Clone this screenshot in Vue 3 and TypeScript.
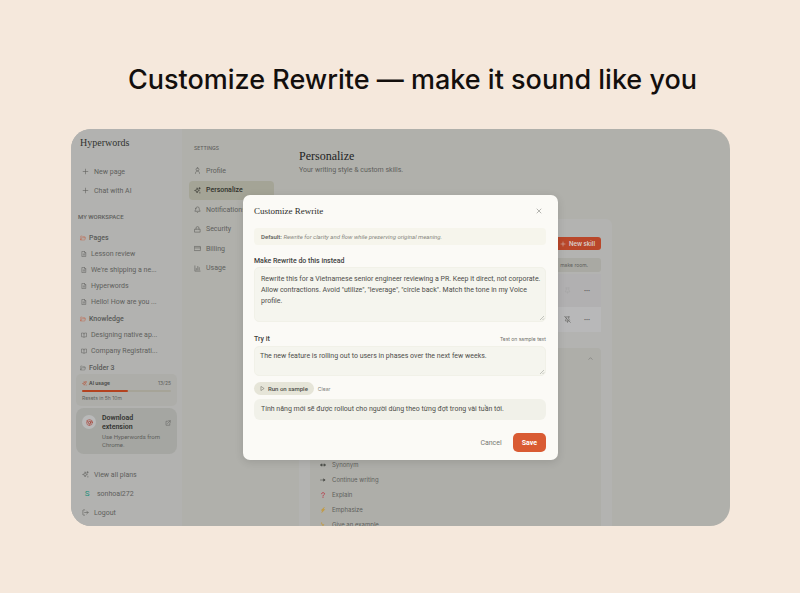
<script setup lang="ts">
import { ref } from 'vue'

interface TreeItem {
  label: string
}
interface TreeGroup {
  label: string
  icon: 'file' | 'book'
  accent: boolean
  items: TreeItem[]
}

const groups: TreeGroup[] = [
  {
    label: 'Pages',
    icon: 'file',
    accent: true,
    items: [
      { label: 'Lesson review' },
      { label: "We're shipping a ne..." },
      { label: 'Hyperwords' },
      { label: 'Hello! How are you ...' },
    ],
  },
  {
    label: 'Knowledge',
    icon: 'book',
    accent: true,
    items: [{ label: 'Designing native ap...' }, { label: 'Company Registrati...' }],
  },
  { label: 'Folder 3', icon: 'file', accent: false, items: [] },
]

const iconPaths: Record<string, string> = {
  plus: 'M12 4v16M4 12h16',
  folder: 'M3 19V4h6l3 3h8v4M3 19l3-8h16l-3 9H4a1 1 0 0 1-1-1z',
  file: 'M5 2h9l5 5v15H5zM14 2v5h5M9 12h6M9 16h6',
  book: 'M12 6v15M12 6C10 4 7 4 2 4v15c5 0 8 0 10 2 2-2 5-2 10-2V4c-5 0-8 0-10 2z',
  sparkles:
    'M11 4l2 5.500 5.500 2.500-5.500 2-2.500 6.500-2-6.500L2 12l6.500-2.500zM19 2v5M16.500 4.500h5M20 18v3',
  user: 'M12 3a5 5 0 1 0 0 10 5 5 0 0 0 0-10zM5 22c0-5 2.500-8 7-8s7 3 7 8',
  bell: 'M6 9a6 6 0 0 1 12 0c0 6 3 7 3 9H3c0-2 3-3 3-9zM10 21c1 1.500 3 1.500 4 0',
  lock: 'M3 11h18v10H3zM7 11V7a5 5 0 0 1 10 0v4',
  card: 'M2 5h20v14H2zM2 10h20',
  chart: 'M3 3v18h18M8 17v-5M13 17V5M18 17V9',
  logout: 'M9 3H5a2 2 0 0 0-2 2v14a2 2 0 0 0 2 2h4M9 12h12M16 7l5 5-5 5',
  external: 'M14 3h7v7M21 3L10 14M10 5H4v16h15v-7',
  close: 'M4 4l16 16M20 4L4 20',
  play: 'M6 3l14 9-14 9z',
  chevron: 'M4 16l8-8 8 8',
  pin: 'M12 17v5M7 3h10M8 3v7l-3 4v3h14v-3l-3-4V3',
  pinOff: 'M12 17v5M5 3h14M8 7v3l-3 4v3h12M16 3v7l3 4M2 2l20 20',
  swap: 'M2 12h20M7 8l-5 4 5 4zM17 8l5 4-5 4z',
  arrow: 'M2 12h18M15 8l5 4-5 4z',
  question: 'M6 7c0-6 12-6 12 0 0 5-6 4-6 9M12 21v1',
  bolt: 'M17 2L5 13h6l-4 9 12-12h-6z',
  bulb: 'M6 3c-2 7 3 9 8 9l-3-4M14 12l-4 4M7 20h10',
}

const settings = [
  { label: 'Profile', icon: 'user' },
  { label: 'Personalize', icon: 'sparkles' },
  { label: 'Notifications', icon: 'bell' },
  { label: 'Security', icon: 'lock' },
  { label: 'Billing', icon: 'card' },
  { label: 'Usage', icon: 'chart' },
]

const skills = [
  { label: 'Synonym', icon: 'swap', tone: 'dark' },
  { label: 'Continue writing', icon: 'arrow', tone: 'dark' },
  { label: 'Explain', icon: 'question', tone: 'red' },
  { label: 'Emphasize', icon: 'bolt', tone: 'gold' },
  { label: 'Give an example', icon: 'bulb', tone: 'gold' },
]

const used = 13
const quota = 25
const instruction = ref(
  'Rewrite this for a Vietnamese senior engineer reviewing a PR. Keep it direct, not corporate. Allow contractions. Avoid "utilize", "leverage", "circle back". Match the tone in my Voice profile.',
)
const sample = ref('The new feature is rolling out to users in phases over the next few weeks.')
</script>

<template>
  <main class="stage">
    <h1 class="headline">Customize Rewrite — make it sound like you</h1>

    <div class="window">
      <aside class="sidebar">
        <div class="brand">Hyperwords</div>
        <div class="actions">
          <button type="button" class="side-row">
            <svg class="ico" viewBox="0 0 24 24"><path :d="iconPaths.plus" /></svg>New page
          </button>
          <button type="button" class="side-row">
            <svg class="ico" viewBox="0 0 24 24"><path :d="iconPaths.plus" /></svg>Chat with AI
          </button>
        </div>
        <div class="caption">MY WORKSPACE</div>
        <div class="tree">
          <div v-for="g in groups" :key="g.label" class="group">
            <a href="#" class="folder" :class="{ accent: g.accent }">
              <svg class="ico" viewBox="0 0 24 24"><path :d="iconPaths.folder" /></svg>{{ g.label }}
            </a>
            <a v-for="i in g.items" :key="i.label" href="#" class="leaf">
              <svg class="ico" viewBox="0 0 24 24"><path :d="iconPaths[g.icon]" /></svg>{{ i.label }}
            </a>
          </div>
        </div>

        <section class="usage">
          <div class="usage-head">
            <svg class="ico" viewBox="0 0 24 24"><path :d="iconPaths.sparkles" /></svg>
            <b>AI usage</b>
            <span class="count">{{ used }}/{{ quota }}</span>
          </div>
          <div class="track"><div class="fill" :style="{ width: (used / quota) * 100 + '%' }"></div></div>
          <div class="resets">Resets in 5h 10m</div>
        </section>

        <a href="#" class="download">
          <span class="chrome">
            <svg class="ico" viewBox="0 0 24 24">
              <circle cx="12" cy="12" r="10" />
              <circle cx="12" cy="12" r="4" />
              <path d="M12 8h9M8.500 14L4 6M15.500 14L11 22" />
            </svg>
          </span>
          <span class="download-text">
            <b>Download extension</b>
            <span>Use Hyperwords from Chrome.</span>
          </span>
          <svg class="ico ext" viewBox="0 0 24 24"><path :d="iconPaths.external" /></svg>
        </a>

        <div class="account">
          <a href="#" class="side-row">
            <svg class="ico" viewBox="0 0 24 24"><path :d="iconPaths.sparkles" /></svg>View all plans
          </a>
          <a href="#" class="side-row user"><span class="avatar">S</span>sonhoai272</a>
          <button type="button" class="side-row">
            <svg class="ico" viewBox="0 0 24 24"><path :d="iconPaths.logout" /></svg>Logout
          </button>
        </div>
      </aside>

      <nav class="settings" aria-label="Settings">
        <div class="settings-caption">SETTINGS</div>
        <div class="settings-list">
          <a v-for="s in settings" :key="s.label" href="#" :class="{ active: s.label === 'Personalize' }">
            <svg class="ico" viewBox="0 0 24 24"><path :d="iconPaths[s.icon]" /></svg>{{ s.label }}
          </a>
        </div>
      </nav>

      <section class="content">
        <h2>Personalize</h2>
        <p class="sub">Your writing style &amp; custom skills.</p>
        <div class="panel">
          <button type="button" class="new-skill">
            <svg class="ico" viewBox="0 0 24 24"><path :d="iconPaths.plus" /></svg>New skill
          </button>
          <div class="notice">make room.</div>
          <div class="skill-row faint">
            <svg class="ico" viewBox="0 0 24 24"><path :d="iconPaths.pin" /></svg><span>•••</span>
          </div>
          <div class="skill-row">
            <svg class="ico" viewBox="0 0 24 24"><path :d="iconPaths.pinOff" /></svg><span>•••</span>
          </div>
          <div class="builtins">
            <svg class="ico fold" viewBox="0 0 24 24"><path :d="iconPaths.chevron" /></svg>
            <ul>
              <li v-for="s in skills" :key="s.label">
                <svg class="ico glyph" :class="[s.tone, s.icon]" viewBox="0 0 24 24">
                  <path :d="iconPaths[s.icon]" />
                </svg>
                {{ s.label }}
              </li>
            </ul>
          </div>
        </div>
      </section>

      <div class="scrim">
        <form class="modal" role="dialog" aria-labelledby="dlg-title" @submit.prevent>
          <header>
            <h3 id="dlg-title">Customize Rewrite</h3>
            <button type="button" class="close" aria-label="Close">
              <svg class="ico" viewBox="0 0 24 24"><path :d="iconPaths.close" /></svg>
            </button>
          </header>
          <p class="default"><b>Default:</b> <i>Rewrite for clarity and flow while preserving original meaning.</i></p>
          <label for="instruction">Make Rewrite do this instead</label>
          <div class="field">
            <textarea id="instruction" v-model="instruction" class="tall" spellcheck="false"></textarea>
            <svg class="grip" viewBox="0 0 6 6"><path d="M1 5L5 1M3.500 5L5 3.500" /></svg>
          </div>
          <div class="try">
            <label for="sample">Try it</label>
            <span>Test on sample text</span>
          </div>
          <div class="field">
            <textarea id="sample" v-model="sample" class="short" spellcheck="false"></textarea>
            <svg class="grip" viewBox="0 0 6 6"><path d="M1 5L5 1M3.500 5L5 3.500" /></svg>
          </div>
          <div class="run-row">
            <button type="button" class="run">
              <svg class="ico" viewBox="0 0 24 24"><path :d="iconPaths.play" /></svg>Run on sample
            </button>
            <button type="button" class="clear">Clear</button>
          </div>
          <output class="result">Tính năng mới sẽ được rollout cho người dùng theo từng đợt trong vài tuần tới.</output>
          <footer>
            <button type="button" class="cancel">Cancel</button>
            <button type="submit" class="save">Save</button>
          </footer>
        </form>
      </div>
    </div>
  </main>
</template>

<style>
body {
  background: #f5e8dc;
}
</style>

<style scoped>
* {
  box-sizing: border-box;
}
.stage {
  display: flex;
  flex-direction: column;
  height: 100vh;
  padding: 60px 70px 67px 71px;
  background: #f5e8dc;
  font-family: Roboto, Inter, sans-serif;
  font-size: 7px;
  color: #5e5f5c;
}
h1,
h2,
h3,
p,
ul {
  margin: 0;
  padding: 0;
}
a {
  color: inherit;
  text-decoration: none;
}
button {
  padding: 0;
  border: 0;
  background: none;
  color: inherit;
  font: inherit;
  text-align: left;
}
.ico {
  flex: none;
  width: 7px;
  height: 7px;
  fill: none;
  stroke: currentColor;
  stroke-width: 2;
  stroke-linecap: round;
  stroke-linejoin: round;
}
.headline {
  height: 69px;
  padding-left: 24px;
  font-family: Inter, sans-serif;
  font-size: 27px;
  font-weight: 500;
  line-height: 40px;
  text-align: center;
  white-space: nowrap;
  color: #130f0d;
}
.window {
  position: relative;
  flex: 1;
  min-height: 0;
  display: flex;
  overflow: hidden;
  border-radius: 20px;
  background: #b0b0ab;
}
.sidebar {
  flex: none;
  display: flex;
  flex-direction: column;
  width: 111px;
  padding: 0 5px 4px;
  background: #b2b2b0;
}
.brand {
  padding-left: 4px;
  font-family: 'Liberation Serif', serif;
  font-size: 10px;
  line-height: 28px;
  color: #31322f;
}
.actions {
  margin: 5px 0 12px;
}
.side-row {
  display: flex;
  align-items: center;
  gap: 5px;
  width: 100%;
  height: 19px;
  padding-left: 6px;
}
.caption {
  padding-left: 2px;
  font-size: 6px;
  font-weight: 500;
  line-height: 10px;
}
.tree {
  flex: 1;
  min-height: 0;
  overflow: hidden;
  margin-top: 8px;
}
.group {
  margin-bottom: 1px;
}
.folder,
.leaf {
  display: flex;
  align-items: center;
  height: 16px;
  white-space: nowrap;
}
.folder {
  gap: 3px;
  padding-left: 4px;
  font-weight: 500;
  color: #585956;
}
.folder .ico {
  width: 6px;
  height: 6px;
  color: #6d6e6b;
}
.accent .ico {
  color: #c0694f;
}
.leaf {
  gap: 4px;
  padding-left: 5px;
}
.leaf .ico {
  width: 6px;
  height: 6px;
}
.usage {
  height: 32px;
  padding: 5px 6px 0;
  border-radius: 5px;
  background: #adada9;
  font-family: Inter, sans-serif;
  font-size: 5px;
}
.usage-head {
  display: flex;
  align-items: center;
  gap: 2px;
  line-height: 8px;
}
.usage-head .ico {
  width: 5px;
  height: 5px;
  color: #b9482a;
}
.usage-head b {
  font-weight: 600;
  color: #464744;
}
.count {
  margin-left: auto;
}
.track {
  height: 2px;
  margin: 3px 0;
  border-radius: 1px;
  background: #a6a498;
}
.fill {
  height: 100%;
  border-radius: 1px;
  background: #b34320;
}
.resets {
  line-height: 7px;
}
.download {
  display: flex;
  align-items: flex-start;
  height: 46px;
  margin: 2px 0 11px;
  padding: 6px;
  border-radius: 8px;
  background: #a5a6a2;
}
.chrome {
  flex: none;
  display: grid;
  place-items: center;
  width: 14px;
  height: 14px;
  margin: 1px 6px 0 0;
  border-radius: 50%;
  background: #b9b9b9;
  color: #a84236;
}
.download-text {
  flex: 1;
  font-size: 6px;
  line-height: 8px;
}
.download-text b {
  display: block;
  width: 40px;
  margin-bottom: 1px;
  font-size: 7px;
  line-height: 9px;
  color: #333431;
  font-weight: 600;
}
.ext {
  width: 6px;
  height: 6px;
  margin-top: 6px;
}
.avatar {
  width: 10px;
  font-size: 8px;
  text-align: center;
  color: #22907c;
}
.settings {
  flex: none;
  width: 92px;
  padding: 14px 0 0 7px;
}
.settings-caption {
  padding-left: 5px;
  font-family: Inter, sans-serif;
  font-size: 5px;
  font-weight: 500;
  line-height: 10px;
}
.settings-list {
  display: flex;
  flex-direction: column;
  justify-content: space-between;
  height: 117px;
  margin-top: 8px;
}
.settings-list a {
  display: flex;
  align-items: center;
  gap: 5px;
  height: 19px;
  padding-left: 5px;
  border-radius: 4px;
}
.settings-list .active {
  background: #a4a496;
  color: #30312b;
  font-weight: 500;
}
.content {
  width: 338px;
  padding: 18px 0 0 25px;
}
h2 {
  font-family: 'Liberation Serif', serif;
  font-size: 12px;
  font-weight: 400;
  line-height: 18px;
  color: #22231f;
}
.sub {
  line-height: 10px;
}
.panel {
  display: flex;
  flex-direction: column;
  height: 100%;
  margin-top: 44px;
  padding: 18px 11px 0;
  border-radius: 6px;
  background: #b3b3b1;
}
.new-skill {
  flex: none;
  align-self: flex-end;
  display: flex;
  align-items: center;
  gap: 3px;
  height: 13px;
  padding: 0 6px;
  border-radius: 3px;
  background: #b9472a;
  color: #d8cfca;
  font-family: Inter, sans-serif;
  font-size: 6px;
  font-weight: 600;
}
.new-skill .ico {
  width: 6px;
  height: 6px;
}
.notice {
  flex: none;
  margin: 8px 0 2px;
  padding-right: 13px;
  border-radius: 3px;
  background: #a9a9a3;
  font-family: Inter, sans-serif;
  font-size: 5px;
  line-height: 14px;
  text-align: right;
}
.skill-row {
  flex: none;
  display: flex;
  justify-content: flex-end;
  align-items: center;
  gap: 13px;
  height: 25px;
  padding-right: 11px;
  background: #b8b8b9;
  font-size: 6px;
}
.faint {
  height: 33px;
  background: #b1b0b1;
}
.faint .ico {
  color: #a5a5a5;
}
.builtins {
  flex: 1;
  margin-top: 16px;
  padding: 8px 8px 0;
  border-radius: 4px;
  background: #aeaea9;
}
.fold {
  display: block;
  width: 5px;
  height: 5px;
  margin-left: auto;
}
.builtins ul {
  margin-top: 96px;
  list-style: none;
  font-family: Inter, sans-serif;
  font-size: 6px;
}
.builtins li {
  display: flex;
  align-items: center;
  gap: 6px;
  height: 15px;
}
.glyph {
  width: 6px;
  height: 6px;
  margin-left: 2px;
  stroke-width: 3;
}
.swap,
.arrow,
.bolt {
  fill: currentColor;
  stroke-width: 2;
}
.dark {
  color: #3f403d;
}
.red {
  color: #b9283a;
}
.gold {
  color: #c49a3c;
}
.scrim {
  position: absolute;
  inset: 0;
  display: grid;
  place-items: center;
}
.modal {
  width: 315px;
  padding: 7px 12px 8px 11px;
  border-radius: 7px;
  background: #fbfaf6;
  box-shadow: 0 2px 8px rgba(0, 0, 0, 0.12);
  color: #4d4e4a;
}
.modal header {
  display: flex;
  align-items: center;
  justify-content: space-between;
  height: 18px;
  padding-right: 4px;
}
h3 {
  font-family: 'Liberation Serif', serif;
  font-size: 9px;
  font-weight: 400;
  color: #2b2c29;
}
.close {
  display: flex;
  color: #6f706b;
}
.close .ico {
  width: 6px;
  height: 6px;
}
.default {
  margin: 8px 0 10px;
  padding: 0 7px;
  border-radius: 4px;
  background: #f6f5ec;
  line-height: 17px;
  font-size: 6px;
  color: #868780;
}
.default b {
  font-weight: 500;
  color: #5c5d58;
}
label {
  display: block;
  font-weight: 500;
  line-height: 12px;
  color: #40413d;
}
.field {
  position: relative;
}
textarea {
  display: block;
  width: 100%;
  padding: 6px 2px 6px 6px;
  border: 1px solid #f1f1e8;
  border-radius: 5px;
  background: #f5f5ee;
  color: inherit;
  font: inherit;
  line-height: 11px;
  outline: none;
  overflow: hidden;
  resize: none;
}
.grip {
  position: absolute;
  right: 1px;
  bottom: 1px;
  width: 6px;
  height: 6px;
  fill: none;
  stroke: #8f908a;
  stroke-width: 0.5;
}
.tall {
  height: 55px;
}
.short {
  height: 30px;
  padding: 4px 5px;
}
.try {
  display: flex;
  align-items: center;
  justify-content: space-between;
  margin: 11px 0 1px;
  font-family: Inter, sans-serif;
  font-size: 5px;
  color: #70716b;
}
.try label {
  font-family: Roboto, Inter, sans-serif;
  font-size: 7px;
}
.run-row {
  display: flex;
  align-items: center;
  gap: 4px;
  margin: 6px 0 4px;
}
.run {
  display: flex;
  align-items: center;
  gap: 3px;
  height: 13px;
  padding: 0 6px;
  border-radius: 7px;
  background: #e6e5d8;
  font-size: 6px;
  font-weight: 500;
}
.run .ico {
  width: 5px;
  height: 5px;
}
.clear {
  font-family: Inter, sans-serif;
  font-size: 5px;
  color: #7d7e78;
}
.result {
  display: block;
  padding: 0 7px;
  border-radius: 6px;
  background: #f1f1e9;
  line-height: 21px;
}
.modal footer {
  display: flex;
  align-items: center;
  justify-content: flex-end;
  gap: 11px;
  margin-top: 13px;
}
.cancel {
  color: #777872;
}
.save {
  height: 19px;
  padding: 0 9px;
  border-radius: 5px;
  background: #d95b33;
  color: #fff;
  font-weight: 700;
}
</style>
